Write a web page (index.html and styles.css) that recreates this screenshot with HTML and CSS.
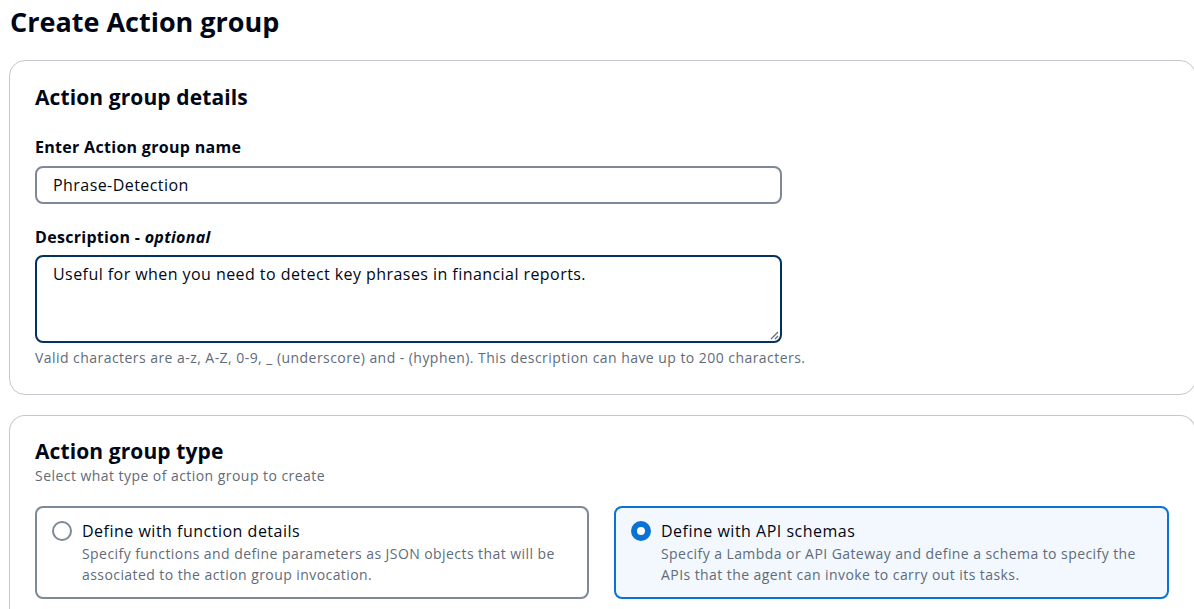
FILE: index.html
```html
<!DOCTYPE html>
<html lang="en">
<head>
<meta charset="utf-8">
<title>Create Action group</title>
<link rel="stylesheet" href="styles.css">
</head>
<body>
<main class="page">
  <h1 class="page-title">Create Action group</h1>

  <section class="card card-details">
    <h2 class="card-title">Action group details</h2>

    <div class="field">
      <label class="field-label" for="ag-name">Enter Action group name</label>
      <div class="input">Phrase-Detection</div>
    </div>

    <div class="field">
      <label class="field-label">Description - <i>optional</i></label>
      <div class="textarea">
        Useful for when you need to detect key phrases in financial reports.
        <svg class="resize" width="9" height="9" viewBox="0 0 9 9"><path d="M8 1 L1 8 M8 5 L5 8" stroke="#5f6b7a" stroke-width="1.2" fill="none"/></svg>
      </div>
      <div class="hint">Valid characters are a-z, A-Z, 0-9, _ (underscore) and - (hyphen). This description can have up to 200 characters.</div>
    </div>
  </section>

  <section class="card card-type">
    <h2 class="card-title">Action group type</h2>
    <div class="card-sub">Select what type of action group to create</div>

    <div class="tiles">
      <div class="tile">
        <span class="radio"></span>
        <div class="tile-body">
          <div class="tile-label">Define with function details</div>
          <div class="tile-desc">Specify functions and define parameters as JSON objects that will be associated to the action group invocation.</div>
        </div>
      </div>
      <div class="tile tile-selected">
        <span class="radio radio-on"></span>
        <div class="tile-body">
          <div class="tile-label">Define with API schemas</div>
          <div class="tile-desc">Specify a Lambda or API Gateway and define a schema to specify the APIs that the agent can invoke to carry out its tasks.</div>
        </div>
      </div>
    </div>
  </section>
</main>
</body>
</html>
```

FILE: styles.css
```css
html, body {
  margin: 0;
  padding: 0;
  background: #ffffff;
}
body {
  font-family: "Open Sans", "Noto Sans", Arial, sans-serif;
  color: #000716;
  overflow: hidden;
}
.page {
  padding: 2px 0 0 9px;
}
.page-title {
  margin: 0 0 0 1px;
  font-size: 27px;
  line-height: 40px;
  font-weight: 700;
}
.card {
  border: 1px solid #c6c6cd;
  margin-right: -2px;
  padding: 20px 0 0 25px;
  box-sizing: border-box;
}
.card-details {
  margin-top: 18px;
  height: 335px;
  border-radius: 16px;
}
.card-type {
  margin-top: 20px;
  height: 220px;
  border-radius: 16px 16px 0 0;
  border-bottom: none;
}
.card-title {
  margin: 0;
  font-size: 21px;
  line-height: 32px;
  font-weight: 700;
  letter-spacing: 0.1px;
}
.field {
  margin-top: 23px;
  width: 747px;
}
.field + .field {
  margin-top: 22px;
}
.field-label {
  display: block;
  font-size: 16px;
  line-height: 22px;
  font-weight: 700;
  letter-spacing: 0.3px;
  margin-bottom: 8px;
}
.field + .field .field-label {
  margin-bottom: 7px;
}
.field-label i {
  font-style: italic;
}
.input, .textarea {
  border: 2px solid #7d8998;
  border-radius: 8px;
  box-sizing: border-box;
  padding: 0 16px;
  font-size: 16px;
  letter-spacing: 0.44px;
  color: #000716;
}
.input {
  height: 38px;
  line-height: 35px;
}
.textarea {
  position: relative;
  height: 88px;
  padding-top: 5px;
  line-height: 24px;
  border-color: #033160;
}
.resize {
  position: absolute;
  right: 1px;
  bottom: 1px;
}
.hint {
  margin-top: 6px;
  font-size: 14px;
  line-height: 18px;
  color: #5f6b7a;
  white-space: nowrap;
  letter-spacing: 0.45px;
}
.card-type .card-title {
  line-height: 30px;
}
.card-sub {
  font-size: 14px;
  line-height: 20px;
  color: #5f6b7a;
  letter-spacing: 0.45px;
}
.tiles {
  display: grid;
  grid-template-columns: 554px 555px;
  column-gap: 25px;
  margin-top: 20px;
}
.tile {
  display: flex;
  gap: 10px;
  border: 2px solid #7d8998;
  border-radius: 8px;
  height: 93px;
  box-sizing: border-box;
  padding: 11px 14px 0 15px;
  background: #ffffff;
}
.tile-selected {
  border-color: #0972d3;
  background: #f2f8fd;
}
.radio {
  flex: none;
  width: 20px;
  height: 20px;
  box-sizing: border-box;
  border: 2px solid #7d8998;
  border-radius: 50%;
  margin-top: 2px;
  background: #ffffff;
}
.radio-on {
  border: 6px solid #0972d3;
}
.tile-label {
  font-size: 16px;
  line-height: 24px;
  letter-spacing: 0.5px;
  color: #000716;
}
.tile-desc {
  font-size: 14px;
  line-height: 21px;
  color: #5f6b7a;
  letter-spacing: 0.43px;
}
```
